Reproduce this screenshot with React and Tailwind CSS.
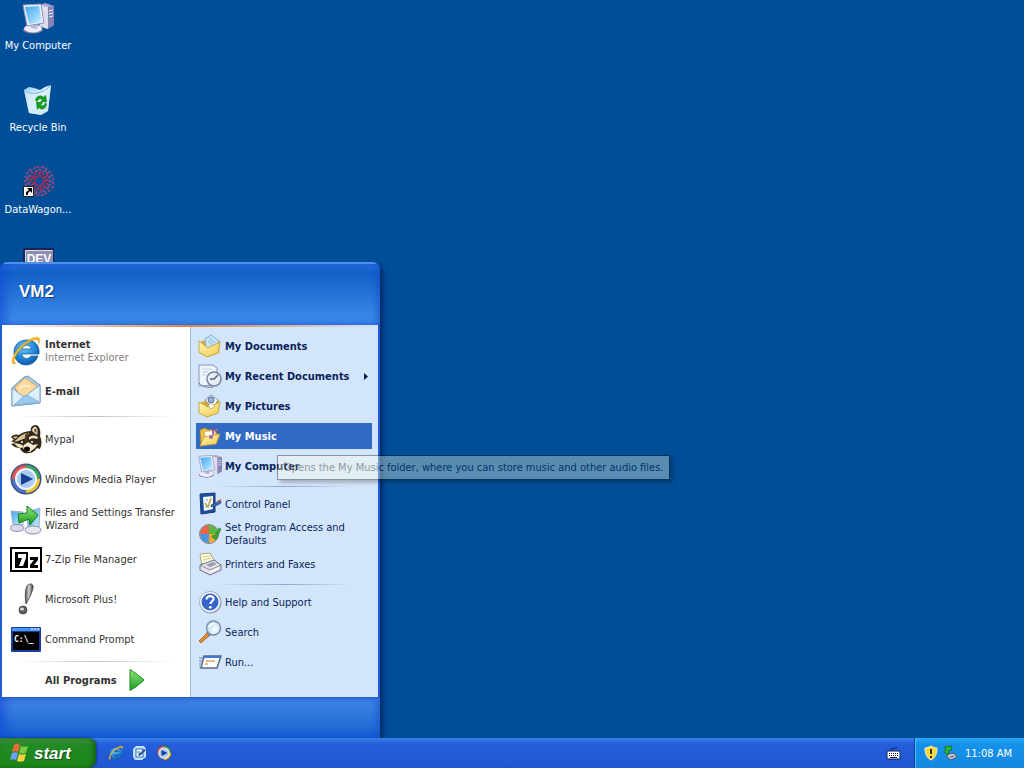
import React from 'react';

/* ---------- Icons ---------- */

function Defs() {
  return (
    <svg className="absolute h-0 w-0" aria-hidden="true">
      <defs>
        <linearGradient id="screen" x1="0" y1="0" x2="1" y2="1">
          <stop offset="0" stopColor="#3fa3ee" />
          <stop offset="0.6" stopColor="#8fd4fb" />
          <stop offset="1" stopColor="#d5f2ff" />
        </linearGradient>
        <linearGradient id="folder" x1="0" y1="0" x2="1" y2="1">
          <stop offset="0" stopColor="#fff8b4" />
          <stop offset="1" stopColor="#efc84e" />
        </linearGradient>
        <linearGradient id="arrow" x1="0" y1="0" x2="0" y2="1">
          <stop offset="0" stopColor="#8fe77a" />
          <stop offset="1" stopColor="#1b9a1f" />
        </linearGradient>
        <linearGradient id="bin" x1="0" y1="0" x2="1" y2="1">
          <stop offset="0" stopColor="#8ccdf5" />
          <stop offset="0.5" stopColor="#e3f4fd" />
          <stop offset="1" stopColor="#a9d3ef" />
        </linearGradient>
        <linearGradient id="silver" x1="0" y1="0" x2="1" y2="0">
          <stop offset="0" stopColor="#4c4c4c" />
          <stop offset="0.45" stopColor="#d4d4d4" />
          <stop offset="1" stopColor="#3c3c3c" />
        </linearGradient>
        <radialGradient id="ball" cx="0.4" cy="0.3" r="0.8">
          <stop offset="0" stopColor="#6fc8f8" />
          <stop offset="0.6" stopColor="#1b7fd0" />
          <stop offset="1" stopColor="#0b4a94" />
        </radialGradient>
        <radialGradient id="lens" cx="0.6" cy="0.6" r="0.7">
          <stop offset="0" stopColor="#ffffff" />
          <stop offset="1" stopColor="#a9d9f2" />
        </radialGradient>
      </defs>
    </svg>
  );
}

function Icon({ size = 32, box = 32, children }) {
  return (
    <svg width={size} height={size} viewBox={`0 0 ${box} ${box}`} className="shrink-0" aria-hidden="true">
      {children}
    </svg>
  );
}

function ComputerIcon({ size }) {
  return (
    <Icon size={size}>
      <path d="M18 3l5-2 9 3v19l-7 4-8-3z" fill="#aaa8cc" />
      <path d="M18 3l8 2v22l-8-3z" fill="#dcdbee" />
      <path d="M26 5l6-1v19l-6 4z" fill="#8583b4" />
      <path d="M27 9l4-1M27 12l4-1M27 15l4-1M20 7l5 1" stroke="#eeeefa" />
      <ellipse cx="11" cy="28" rx="10" ry="3.500" fill="#7d7ba8" />
      <ellipse cx="11" cy="26.500" rx="9" ry="4" fill="#eeedf8" />
      <path d="M9 21l7 1-1 5-6-1z" fill="#b9b7d6" />
      <path d="M1 3l18-1 3 19-17 3z" fill="#f0f0f8" stroke="#9290bd" />
      <path d="M3 5l14-1 3 16-13 2z" fill="url(#screen)" />
    </Icon>
  );
}

function RecycleIcon() {
  return (
    <Icon>
      <path d="M2 6l5-3 5 1 6 2 5-3 6-2-3 26-7 4-12-2z" fill="url(#bin)" />
      <path d="M2 6c8 4 19 2 27-5l-3 26-7 4-12-2z" fill="#d4ecfa" fillOpacity="0.7" />
      <path d="M2 6c5 6 20 4 27-5" fill="none" stroke="#7fb6dd" />
      <path d="M13 16c1-4 6-6 8-3l3-2 1 7h-7l2-2c-2-2-3-1-5 2z" fill="#1c9a20" />
      <path d="M25 20c-1 5-5 7-8 4l-2 2-1-8h7l-2 3c2 1 4 0 4-3z" fill="#1c9a20" />
    </Icon>
  );
}

// dotted red rosette with the shortcut arrow in the corner
function WagonIcon() {
  const dots = [];
  [5, 8, 11, 14].forEach((r, ring) => {
    const count = 9 + ring * 4;
    for (let i = 0; i < count; i += 1) {
      const a = (i / count) * Math.PI * 2 + ring * 0.35;
      dots.push([Math.round(17 + Math.cos(a) * r), Math.round(15 + Math.sin(a) * r), ring]);
    }
  });
  return (
    <Icon>
      {dots.map(([x, y, ring], i) => (
        <path
          key={i}
          d={i % 2 ? `M${x - 1} ${y - 1}l2 2` : `M${x - 1} ${y + 1}l3-2`}
          stroke={ring < 2 ? '#b5284c' : '#8c4a7c'}
          strokeWidth="2"
        />
      ))}
      <rect x="1.500" y="20.500" width="10" height="10" fill="#fff" stroke="#222" />
      <path d="M4 29v-3l3-2-2-2h5v5l-2-2-2 2v2z" fill="#000" />
    </Icon>
  );
}

function DevIcon() {
  return (
    <Icon>
      <rect x="2" y="1" width="30" height="30" rx="2" fill="#dcdcee" stroke="#1c2350" strokeWidth="2" />
      <rect x="4" y="3" width="27" height="18" fill="#8d90b4" />
      <text x="17" y="15" textAnchor="middle" fontSize="12" fontWeight="700" fontFamily="Liberation Sans, sans-serif" fill="#fff">DEV</text>
    </Icon>
  );
}

function IeIcon({ size }) {
  return (
    <Icon size={size}>
      <path d="M29 19H12c0 5 7 6 9 2h7c-2 6-7 9-12 9C9 30 4 24 4 17S9 5 17 5s13 6 12 14zM12 14h9c0-5-8-5-9 0z" fill="url(#ball)" stroke="#1760a8" strokeWidth="0.8" fillRule="evenodd" />
      <path d="M6 28c-6 4-5-6 2-14C16 5 26 0 29 3c2 2 0 5-1 7 1-3 1-5-1-5C23 4 14 9 9 16c-5 6-6 12-3 12z" fill="#f5b926" stroke="#d18e10" strokeWidth="0.4" />
    </Icon>
  );
}

function MailIcon() {
  return (
    <Icon>
      <path d="M2 13L14 2l4-1 12 9v18L2 31z" fill="#a8cbe8" stroke="#6d94b8" />
      <path d="M5 12l10-9 12 8-4 9-14 2z" fill="#fbd9a0" stroke="#d7a35c" />
      <path d="M9 14c3-4 9-4 12-2" fill="none" stroke="#fff1d2" strokeWidth="1.500" />
      <path d="M2 13l12 9 16-12v18L2 31z" fill="#dcf0fc" stroke="#7ba5c8" />
      <path d="M4 30l9-8 4-2 12 7z" fill="#9ccbf2" stroke="#7ba5c8" strokeWidth="0.8" />
    </Icon>
  );
}

function RaccoonIcon() {
  return (
    <Icon>
      <path d="M1 14c2-3 6-3 8-2 4-3 8-4 12-4-1-3 1-6 5-6 4 1 5 7 4 11 2 4 2 9 0 13l-3-1c-2 3-5 5-8 5-4 1-8-1-9-5-3 0-6-1-9-4l4-1-4-2 3-1z" fill="#33281c" />
      <path d="M22 8c0-3 2-5 4-4 2 2 2 5 1 8z" fill="#e9d9b2" />
      <path d="M24 8c0-2 1-3 2-2l1 4z" fill="#6c543b" />
      <path d="M3 14c2-1 4-1 5 0l-3 2z" fill="#cdb88a" />
      <path d="M8 15c3-3 7-5 11-5l-3 5-8 3-4 1z" fill="#dcc896" />
      <path d="M19 14c3-2 6-2 9 0l-1 2c-3-1-6-1-8 1z" fill="#f0e2bc" />
      <path d="M15 12l3-3-1 9-2 1z" fill="#4a3826" />
      <path d="M4 20l6 1 4 2-2 2c-3 0-6-2-8-5z" fill="#f0e2bc" />
      <path d="M14 22l4-3 5 3 5-1-3 4-5 4-5-1-2-3z" fill="#f4ead0" />
      <ellipse cx="17" cy="26" rx="3" ry="2.500" fill="#0c0906" />
      <circle cx="12" cy="19" r="1" fill="#fff" />
      <circle cx="22" cy="19" r="1" fill="#fff" />
    </Icon>
  );
}

function MediaPlayerIcon({ size }) {
  return (
    <Icon size={size}>
      <circle cx="16" cy="16" r="15.500" fill="#3d5384" />
      <path d="M16 16V2a14 14 0 0 1 14 14z" fill="#3fa65c" />
      <path d="M16 16h14a14 14 0 0 1-14 14z" fill="#f4c52d" />
      <path d="M16 16v14A14 14 0 0 1 2 16z" fill="#4a72c9" />
      <path d="M16 16H2A14 14 0 0 1 16 2z" fill="#df5750" />
      <circle cx="16" cy="16" r="11" fill="#eef3fb" />
      <circle cx="16" cy="16" r="9" fill="#a9caf2" />
      <path d="M11 10l12 6-12 6z" fill="#173f96" />
    </Icon>
  );
}

function TransferIcon() {
  return (
    <Icon>
      <path d="M1 8l12 1v13l-10-1z" fill="url(#screen)" stroke="#a5aac8" />
      <path d="M17 9l13-4-1 19-11 2z" fill="url(#screen)" stroke="#a5aac8" />
      <ellipse cx="7" cy="25" rx="7" ry="3.500" fill="#d8dae9" stroke="#8e90ae" />
      <ellipse cx="23" cy="27" rx="8" ry="4" fill="#e6e7f2" stroke="#8e90ae" />
      <path d="M8 11l9-1V3l11 9-8 10-1-6-10 4z" fill="url(#arrow)" stroke="#187a1a" />
    </Icon>
  );
}

function SevenZipIcon() {
  return (
    <Icon>
      <rect x="1" y="5" width="30" height="23" fill="#fff" stroke="#000" strokeWidth="2" />
      <rect x="5" y="9" width="13" height="16" fill="#000" />
      <path d="M8 11h8v4l-3 8H9l3-8H8z" fill="#fff" />
      <path d="M20 14h8v3l-4 5h4v3h-8v-3l4-5h-4z" fill="#000" />
    </Icon>
  );
}

function PlusIcon() {
  return (
    <Icon>
      <path d="M17 3c2-3 7-3 6 2-1 5-4 11-7 16-1-6-1-14 1-18z" fill="url(#silver)" stroke="#3c3c3c" strokeWidth="0.8" />
      <circle cx="13" cy="27" r="4" fill="#5e5e5e" stroke="#3c3c3c" strokeWidth="0.8" />
      <ellipse cx="12" cy="26" rx="2" ry="1.500" fill="#dcdcdc" />
    </Icon>
  );
}

function CommandIcon() {
  return (
    <Icon>
      <rect x="1" y="4" width="30" height="25" rx="1" fill="#16409b" />
      <rect x="2" y="5" width="28" height="3" fill="#4c95ee" />
      <path d="M21 6h2M24 6h2M27 6h2" stroke="#fff" />
      <rect x="3" y="9" width="26" height="18" fill="#000" />
      <text x="4" y="19" fontSize="8" fontWeight="700" fontFamily="DejaVu Sans Mono, monospace" fill="#fff">C:\_</text>
    </Icon>
  );
}

function DocumentsIcon() {
  return (
    <Icon size={24} box={24}>
      <path d="M2 8L1 19l8 4 12-4 1-12-9-3z" fill="#d9aa31" />
      <path d="M7 5l6-4 8 6-5 9-8-2z" fill="#c5e6f8" stroke="#87aac8" />
      <path d="M11 4l6 5M10 7l5 4" stroke="#8bb1cf" />
      <path d="M1 7l9 7 12-6-2 11-11 4-8-5z" fill="url(#folder)" stroke="#c49b30" strokeWidth="0.8" />
    </Icon>
  );
}

function RecentIcon() {
  return (
    <Icon size={24} box={24}>
      <path d="M1 1h14l4 3v17l-18 1z" fill="#eef3fb" stroke="#8796b2" />
      <path d="M4 5h10M4 8h6M4 11h4" stroke="#c2cfdf" />
      <circle cx="16" cy="15" r="7" fill="#e8eef5" stroke="#77859b" strokeWidth="1.500" />
      <path d="M20 11l-4 4h-4" stroke="#55637c" strokeWidth="1.500" fill="none" />
      <path d="M1 19c3 4 10 5 14 4" stroke="#6d7a92" fill="none" />
    </Icon>
  );
}

function PicturesIcon() {
  return (
    <Icon size={24} box={24}>
      <path d="M2 9l5-2 14-1-1 13-11 4-8-4z" fill="#d9aa31" />
      <path d="M7 6l6-5 7 5-5 9z" fill="#f4f7ff" stroke="#8895ae" />
      <circle cx="13" cy="6" r="3" fill="#8fb3d6" stroke="#5d718e" />
      <path d="M1 8l9 5 12-5-2 11-11 4-8-4z" fill="url(#folder)" stroke="#c49b30" strokeWidth="0.8" />
      <path d="M10 12l3-3 4 3-4 3z" fill="#fffbe0" stroke="#b79b59" strokeWidth="0.6" />
    </Icon>
  );
}

function MusicIcon() {
  return (
    <Icon size={24} box={24}>
      <path d="M2 6l5-2 3 2 9-1v6L3 22z" fill="#e7bd4c" stroke="#b58a24" strokeWidth="0.8" />
      <path d="M7 8l9-1 1 6-9 2z" fill="#fff" />
      <path d="M15 12V3c1 3 4 3 4 6" stroke="#6e4bb8" strokeWidth="1.500" fill="none" />
      <path d="M2 22l4-9 16-3-4 10z" fill="url(#folder)" stroke="#c49b30" strokeWidth="0.8" />
      <circle cx="13" cy="13" r="2" fill="#a06a9c" />
    </Icon>
  );
}

function ControlPanelIcon() {
  return (
    <Icon size={24} box={24}>
      <path d="M2 2l15-1v19L3 22z" fill="#1e4f9e" stroke="#153a78" />
      <path d="M5 5l10-1v13L6 19z" fill="#f5faff" />
      <path d="M7 11l3 4 3-9" fill="none" stroke="#c0a02d" strokeWidth="1.500" />
      <path d="M8 8h2M7 15h2" stroke="#53a5d9" />
      <path d="M13 13l6-3 4-1v2l-3 2-7 2z" fill="#3b65b5" stroke="#203f7b" strokeWidth="0.6" />
      <path d="M19 9l4-2v3z" fill="#d44b3c" />
    </Icon>
  );
}

function ProgramAccessIcon() {
  return (
    <Icon size={24} box={24}>
      <circle cx="11" cy="12" r="9.500" fill="#a9b9a8" stroke="#77838f" />
      <path d="M11 12V3a9 9 0 0 0-9 9z" fill="#e8654a" />
      <path d="M11 12H2a9 9 0 0 0 9 9z" fill="#4f91dc" />
      <path d="M11 12V3c5 0 9 4 9 9z" fill="#58b947" />
      <path d="M11 12h9a9 9 0 0 1-9 9z" fill="#f5a832" />
      <path d="M14 15l4 3 5-11-2-1-4 8-2-1z" fill="#3aa632" stroke="#217521" strokeWidth="0.6" />
    </Icon>
  );
}

function PrinterIcon() {
  return (
    <Icon size={24} box={24}>
      <path d="M2 2l10-1 5 9-13 4z" fill="#fffce0" stroke="#a7a388" />
      <path d="M4 5l8-1M5 8l8-2" stroke="#cfc98c" />
      <path d="M2 13l14-5 7 5v5l-11 5-10-5z" fill="#e2e3ea" stroke="#6c6f7f" />
      <path d="M2 13l10 5 11-5" fill="none" stroke="#8b8e9d" />
      <path d="M8 13l7-3 4 2-7 3z" fill="#9a9dab" />
      <path d="M12 20l9-4" stroke="#fff" strokeWidth="1.500" />
    </Icon>
  );
}

function HelpIcon() {
  return (
    <Icon size={24} box={24}>
      <circle cx="12.500" cy="12.500" r="11" fill="#8795ae" />
      <circle cx="12" cy="12" r="10.500" fill="#f6f9ff" stroke="#a9b5c9" />
      <circle cx="12" cy="12" r="8.500" fill="#3565c8" />
      <path d="M8.500 9.500c0-5 8-4 7 0-1 2-3 2-3 4.500" fill="none" stroke="#fff" strokeWidth="2.200" />
      <circle cx="12.300" cy="17.300" r="1.400" fill="#fff" />
    </Icon>
  );
}

function SearchIcon() {
  return (
    <Icon size={24} box={24}>
      <path d="M9 13l-8 8 2 2 9-8z" fill="#e18d35" stroke="#9a5a1a" strokeWidth="0.8" />
      <path d="M9 12l3 4" stroke="#6f7c8c" strokeWidth="2" />
      <circle cx="15.500" cy="8" r="7" fill="url(#lens)" stroke="#7d90a6" strokeWidth="1.500" />
      <path d="M11 7c1-3 4-4 6-3" stroke="#fff" strokeWidth="1.500" fill="none" />
    </Icon>
  );
}

function RunIcon() {
  return (
    <Icon size={24} box={24}>
      <path d="M6 6h17l-4 12H3z" fill="#fff" stroke="#56688c" strokeWidth="1.500" />
      <path d="M6 6h17l-1 2H5z" fill="#3f78cc" />
      <path d="M8 12l1-1h8M7 14h3" stroke="#d3aa6f" strokeWidth="1.500" fill="none" />
      <path d="M1 8h4M1 11h3M1 14h3M1 17h2" stroke="#7285a5" />
    </Icon>
  );
}

function WindowsFlag() {
  return (
    <Icon size={20} box={20}>
      <path d="M4 2c3-2 4-1 6 0L8 9C6 8 5 8 2 9z" fill="#ee6a35" />
      <path d="M11 3c2 1 4 1 7 0l-2 7c-3 1-5 1-7 0z" fill="#7cc744" />
      <path d="M2 10c3-1 4-1 6 0l-2 7c-2-1-3-1-6 0z" fill="#6f9ff5" />
      <path d="M9 11c2 1 4 1 7 0l-2 7c-3 1-5 1-7 0z" fill="#fbd044" />
    </Icon>
  );
}

function ShowDesktopIcon() {
  return (
    <Icon size={16} box={16}>
      <path d="M1 4l3-3h8l2 3v8l-4 3H3l-2-3z" fill="#bfe3fa" />
      <rect x="4" y="4" width="7" height="8" fill="#fff" stroke="#2c6eb4" />
      <path d="M6 10l6-6 2 1-6 6z" fill="#245794" />
      <path d="M5 7h3M6 9h2" stroke="#2c6eb4" />
    </Icon>
  );
}

function KeyboardIcon() {
  return (
    <Icon size={16} box={16}>
      <path d="M5 5c0-3 5 0 6-3" fill="none" stroke="#101c50" />
      <rect x="1" y="6" width="13" height="8" rx="1" fill="#fff" stroke="#101c50" />
      <path d="M3 8.500h10M3 10.500h10" stroke="#101c50" strokeDasharray="1 1" />
      <path d="M4 12.500h7" stroke="#101c50" />
    </Icon>
  );
}

function ShieldIcon() {
  return (
    <Icon size={16} box={16}>
      <path d="M8 1c2 1 4 2 6 2 0 6-2 10-6 12C4 13 2 9 2 3c2 0 4-1 6-2z" fill="#fbd634" stroke="#f4f0d0" />
      <path d="M8 4v5M8 11v2" stroke="#3b3000" strokeWidth="2" />
    </Icon>
  );
}

function SafeRemoveIcon() {
  return (
    <Icon size={16} box={16}>
      <path d="M6 9l6-1 3 4-6 3-4-3z" fill="#c2c7d6" stroke="#4d5574" />
      <path d="M8 12l4-1" stroke="#4d5574" />
      <path d="M2 2l8-1-1 5-2-1-1 5-4-3 2-3z" fill="#30b53c" stroke="#14681d" strokeWidth="0.8" />
    </Icon>
  );
}

/* ---------- Desktop ---------- */

const shortcuts = [
  { label: 'My Computer', icon: <ComputerIcon size={32} /> },
  { label: 'Recycle Bin', icon: <RecycleIcon /> },
  { label: 'DataWagon...', icon: <WagonIcon /> },
  { label: 'Dev', icon: <DevIcon />, covered: true },
];

function Shortcut({ label, icon, covered }) {
  return (
    <button type="button" aria-label={label} className="flex h-[82px] flex-col items-center gap-1 pt-0.5 text-white">
      {icon}
      {!covered && <span className="leading-4">{label}</span>}
    </button>
  );
}

/* ---------- Start menu ---------- */

const pinned = [
  { label: 'Internet', note: 'Internet Explorer', icon: <IeIcon size={32} /> },
  { label: 'E-mail', icon: <MailIcon /> },
];

const recent = [
  { label: 'Mypal', icon: <RaccoonIcon /> },
  { label: 'Windows Media Player', icon: <MediaPlayerIcon size={32} /> },
  { label: 'Files and Settings Transfer Wizard', icon: <TransferIcon /> },
  { label: '7-Zip File Manager', icon: <SevenZipIcon /> },
  { label: 'Microsoft Plus!', icon: <PlusIcon /> },
  { label: 'Command Prompt', icon: <CommandIcon /> },
];

const places = [
  { label: 'My Documents', icon: <DocumentsIcon /> },
  { label: 'My Recent Documents', icon: <RecentIcon />, more: true },
  { label: 'My Pictures', icon: <PicturesIcon /> },
  { label: 'My Music', icon: <MusicIcon />, active: true },
  { label: 'My Computer', icon: <ComputerIcon size={24} /> },
];

const settings = [
  { label: 'Control Panel', icon: <ControlPanelIcon /> },
  { label: 'Set Program Access and Defaults', icon: <ProgramAccessIcon /> },
  { label: 'Printers and Faxes', icon: <PrinterIcon /> },
];

const tools = [
  { label: 'Help and Support', icon: <HelpIcon /> },
  { label: 'Search', icon: <SearchIcon /> },
  { label: 'Run...', icon: <RunIcon /> },
];

function ProgramItem({ label, note, icon, bold }) {
  return (
    <button type="button" className="flex h-10 w-full items-center gap-[3px] pr-3 pl-2 text-left text-[#333]">
      {icon}
      <span className="flex flex-col">
        <span className={bold ? 'font-bold' : ''}>{label}</span>
        {note && <span className="text-[#808080]">{note}</span>}
      </span>
    </button>
  );
}

function PlaceItem({ label, icon, bold, active, more }) {
  return (
    <button
      type="button"
      className={`my-0.5 flex h-[26px] w-full items-center gap-[3px] pr-1 pl-0.5 text-left ${bold ? 'font-bold' : ''} ${active ? 'bg-[#316ac5] text-white' : 'text-[#0a1f5c]'}`}
    >
      {icon}
      <span className="flex-1">{label}</span>
      {more && (
        <svg width="4" height="7" viewBox="0 0 4 7" aria-hidden="true">
          <path d="M0 0l4 3.500L0 7z" fill="#0a1c50" />
        </svg>
      )}
    </button>
  );
}

function PlaceSeparator() {
  return (
    <div className="h-2 px-5 pt-[5px]">
      <div className="h-px bg-linear-to-r from-transparent via-[#8fa6cc] to-transparent" />
    </div>
  );
}

function StartMenu() {
  return (
    <nav
      aria-label="Start menu"
      className="absolute bottom-0 left-0 w-[380px] overflow-hidden rounded-t-lg bg-[#1e5ad4] shadow-[3px_3px_4px_rgba(0,10,50,0.5)]"
    >
      <header className="flex h-[63px] items-center border-t-2 border-[#4c92ea] bg-linear-to-b from-[#2a74dc] via-[#1060c8] via-15% to-[#3f8fec] px-[19px] pb-1.5 shadow-[inset_6px_0_8px_rgba(20,70,215,0.6),inset_-4px_0_5px_rgba(20,70,200,0.4)]">
        <h1 className="font-['Liberation_Sans',sans-serif] text-[17px] leading-5 font-bold text-white [text-shadow:1px_1px_1px_#0a3a8c]">VM2</h1>
      </header>
      <div className="relative mx-0.5 flex">
        <div className="absolute inset-x-0 top-0 h-0.5 bg-linear-to-r from-transparent via-[#d8843c] to-transparent" />
        <section className="w-[188px] bg-white pt-1.5">
          {pinned.map((item) => (
            <ProgramItem key={item.label} {...item} bold />
          ))}
          <div className="h-2 px-4 pt-[5px]">
            <div className="h-px bg-linear-to-r from-transparent via-[#c4c4bc] to-transparent" />
          </div>
          {recent.map((item) => (
            <ProgramItem key={item.label} {...item} />
          ))}
          <div className="h-1 px-4 pt-0.5">
            <div className="h-px bg-linear-to-r from-transparent via-[#c4c4bc] to-transparent" />
          </div>
          <button type="button" className="flex h-[34px] w-full items-center gap-3 pl-[43px] font-bold text-[#333]">
            All Programs
            <svg width="16" height="24" viewBox="0 0 16 24" aria-hidden="true">
              <path d="M1 1.500c5 3 10 7 14 10.500-4 4-9 8-14 10.500z" fill="url(#arrow)" stroke="#1e8a22" />
            </svg>
          </button>
        </section>
        <section className="flex flex-1 flex-col border-l border-[#95bdee] bg-[#d3e5fa] pt-1.5 pr-1.5 pl-[5px]">
          {places.map((item) => (
            <PlaceItem key={item.label} {...item} bold />
          ))}
          <PlaceSeparator />
          {settings.map((item) => (
            <PlaceItem key={item.label} {...item} />
          ))}
          <PlaceSeparator />
          {tools.map((item) => (
            <PlaceItem key={item.label} {...item} />
          ))}
        </section>
      </div>
      <footer className="h-[41px] border-t border-[#2a62c0] bg-linear-to-b from-[#4288e4] to-[#1260d0] shadow-[inset_6px_0_8px_rgba(20,70,215,0.6),inset_-4px_0_5px_rgba(20,70,200,0.4)]" />
    </nav>
  );
}

/* ---------- Taskbar ---------- */

function Taskbar() {
  return (
    <footer className="relative flex h-[30px] items-stretch bg-linear-to-b from-[#3c80e8] via-[#245edb] via-20% to-[#2055d0] text-white">
      <button
        type="button"
        className="flex w-24 items-center gap-1 rounded-r-lg bg-linear-to-b from-[#3f8f3f] via-[#228a22] via-25% to-[#1a861a] pl-2.5 font-['Liberation_Sans',sans-serif] text-[17px] font-bold italic shadow-[inset_-3px_0_4px_rgba(10,70,10,0.5),1px_0_2px_rgba(10,30,100,0.6)] [text-shadow:1px_1px_1px_#1c4a1c]"
      >
        <WindowsFlag />
        start
      </button>
      <div className="flex flex-1 items-center gap-2 pl-3">
        <button type="button" aria-label="Internet Explorer"><IeIcon size={16} /></button>
        <button type="button" aria-label="Show Desktop"><ShowDesktopIcon /></button>
        <button type="button" aria-label="Windows Media Player"><MediaPlayerIcon size={16} /></button>
      </div>
      <button type="button" aria-label="Keyboard layout" className="px-3"><KeyboardIcon /></button>
      <div className="flex w-[110px] items-center gap-[3px] border-l border-[#0f3e9c] bg-linear-to-b from-[#2aa8f4] via-[#1592e8] via-20% to-[#1588e0] pl-2 shadow-[inset_1px_0_1px_#4cc0fa]">
        <ShieldIcon />
        <SafeRemoveIcon />
        <time className="flex-1 pr-3 text-right">11:08 AM</time>
      </div>
    </footer>
  );
}

export default function App() {
  return (
    <div className="flex h-screen flex-col overflow-hidden bg-[#004e98] font-['DejaVu_Sans_Condensed','DejaVu_Sans',sans-serif] text-[11px] leading-[13px]">
      <Defs />
      <main className="relative min-h-0 flex-1">
        <div className="flex w-[76px] flex-col">
          {shortcuts.map((item) => (
            <Shortcut key={item.label} {...item} />
          ))}
        </div>
        <StartMenu />
        <div
          role="tooltip"
          className="absolute top-[455px] left-[277px] border border-black bg-[#ffffe1] px-1.5 py-[5px] whitespace-nowrap text-black opacity-35 shadow-[3px_3px_3px_rgba(0,0,0,0.6)]"
        >
          Opens the My Music folder, where you can store music and other audio files.
        </div>
      </main>
      <Taskbar />
    </div>
  );
}
